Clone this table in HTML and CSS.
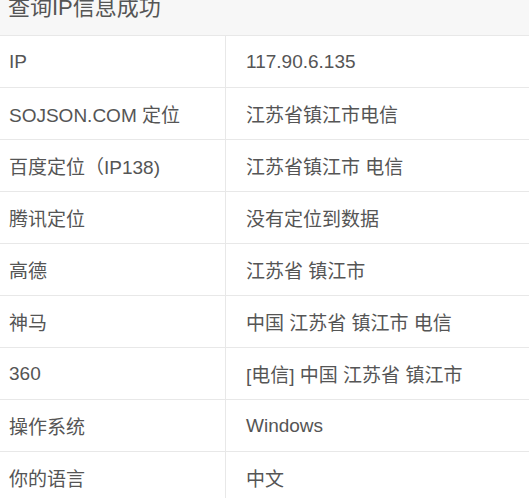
FILE: index.html
```html
<!DOCTYPE html>
<html lang="zh-CN">
<head>
    <meta charset="UTF-8">
    <meta name="viewport" content="width=device-width, initial-scale=1.0">
    <title>查询IP信息</title>
    <link rel="stylesheet" href="styles.css">
</head>
<body>
    <div class="panel">
        <div class="panel-heading">
            <h3 class="panel-title">查询IP信息成功</h3>
        </div>
        <div class="info-list">
            <div class="row"><span class="key">IP</span><span class="val">117.90.6.135</span></div>
            <div class="row"><span class="key">SOJSON.COM 定位</span><span class="val">江苏省镇江市电信</span></div>
            <div class="row"><span class="key">百度定位（IP138)</span><span class="val">江苏省镇江市 电信</span></div>
            <div class="row"><span class="key">腾讯定位</span><span class="val">没有定位到数据</span></div>
            <div class="row"><span class="key">高德</span><span class="val">江苏省 镇江市</span></div>
            <div class="row"><span class="key">神马</span><span class="val">中国 江苏省 镇江市 电信</span></div>
            <div class="row"><span class="key">360</span><span class="val">[电信] 中国 江苏省 镇江市</span></div>
            <div class="row"><span class="key">操作系统</span><span class="val">Windows</span></div>
            <div class="row"><span class="key">你的语言</span><span class="val">中文</span></div>
        </div>
    </div>
</body>
</html>
```

FILE: styles.css
```css
*{
    padding: 0px;
    margin: 0px;
    box-sizing: border-box;
}
body{
    font-family: "Liberation Sans", "Noto Sans CJK SC", sans-serif;
    color: #555;
    background-color: #fff;
}
.panel{
    width: 529px;
    overflow: hidden;
}
.panel-heading{
    height: 36px;
    background-color: #f7f7f7;
    border-bottom: 1px solid #e8e8e8;
    padding: 0 8px;
    overflow: hidden;
}
.panel-title{
    font-weight: normal;
    font-size: 22px;
    line-height: 22px;
    margin-top: -3px;
    color: #555;
}
.row{
    display: grid;
    grid-template-columns: 226px 1fr;
    height: 52px;
    border-bottom: 1px solid #e8e8e8;
    font-size: 19px;
}
.key, .val{
    display: flex;
    align-items: center;
    white-space: nowrap;
}
.key{
    padding-left: 9px;
    border-right: 1px solid #e8e8e8;
}
.val{
    padding-left: 20px;
}
```
